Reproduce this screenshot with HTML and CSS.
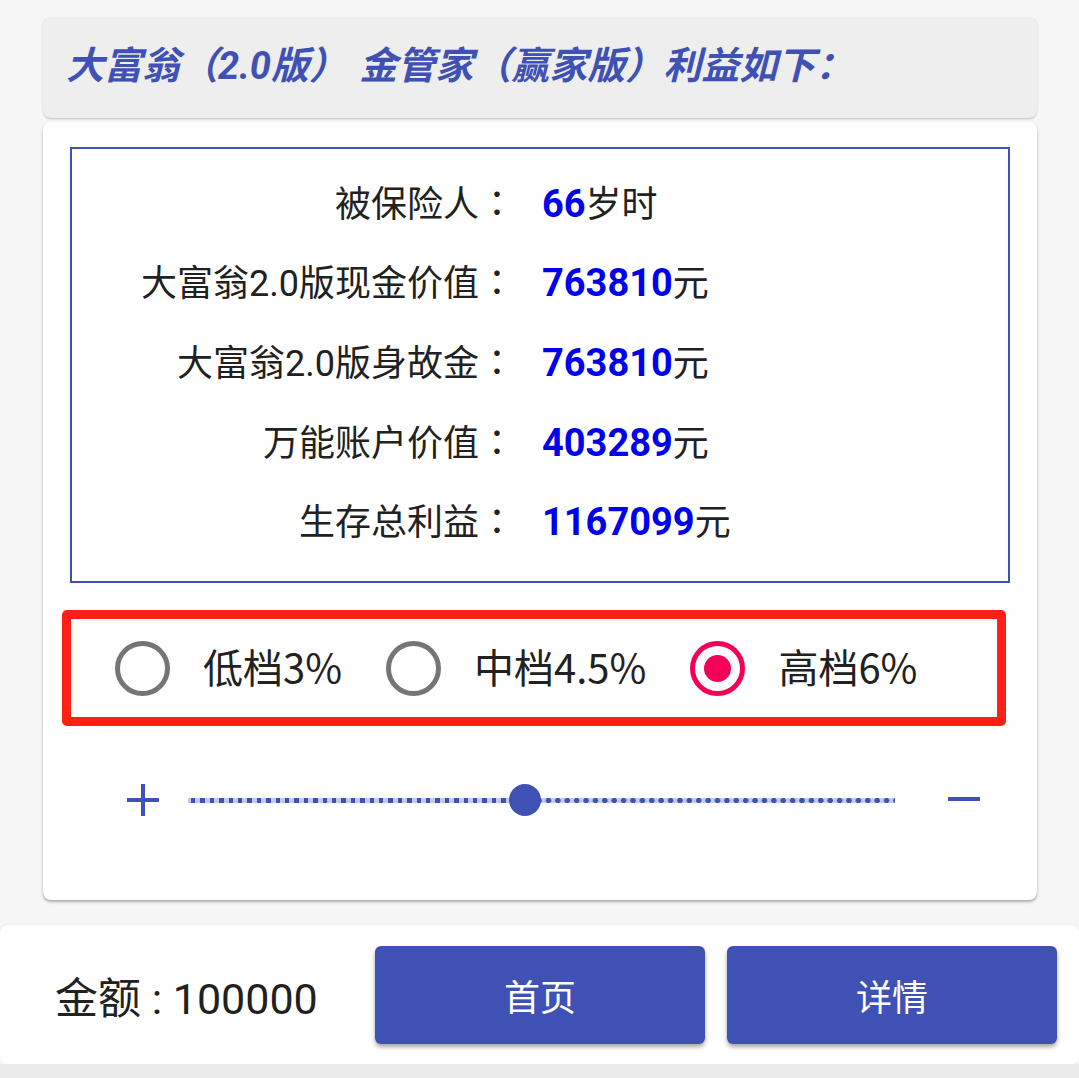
FILE: index.html
```html
<!DOCTYPE html>
<html lang="zh-CN">
<head>
<meta charset="utf-8">
<title>利益演示</title>
<link rel="stylesheet" href="styles.css">
</head>
<body>
<div class="page">
  <div class="header">
    <h1 class="title">大富翁（2.0版） 金管家（赢家版）利益如下：</h1>
  </div>

  <div class="card">
    <div class="databox">
      <div class="row"><span class="label">被保险人<span class="colon" lang="zh-TW">：</span></span><span class="value"><b class="num">66</b>岁时</span></div>
      <div class="row"><span class="label">大富翁2.0版现金价值<span class="colon" lang="zh-TW">：</span></span><span class="value"><b class="num">763810</b>元</span></div>
      <div class="row"><span class="label">大富翁2.0版身故金<span class="colon" lang="zh-TW">：</span></span><span class="value"><b class="num">763810</b>元</span></div>
      <div class="row"><span class="label">万能账户价值<span class="colon" lang="zh-TW">：</span></span><span class="value"><b class="num">403289</b>元</span></div>
      <div class="row"><span class="label">生存总利益<span class="colon" lang="zh-TW">：</span></span><span class="value"><b class="num">1167099</b>元</span></div>
    </div>

    <div class="radios">
      <div class="radio"><span class="ring"></span><span class="rtext">低档3%</span></div>
      <div class="radio"><span class="ring"></span><span class="rtext">中档4.5%</span></div>
      <div class="radio checked"><span class="ring"><span class="dot"></span></span><span class="rtext">高档6%</span></div>
    </div>

    <div class="slider">
      <svg class="icon-plus" width="32" height="32" viewBox="0 0 32 32"><path d="M16 0V32M0 16H32" stroke="#3f51b5" stroke-width="4" fill="none"/></svg>
      <div class="track">
        <div class="t-left"></div>
        <div class="t-right"></div>
        <div class="thumb"></div>
      </div>
      <svg class="icon-minus" width="32" height="32" viewBox="0 0 32 32"><path d="M0 15H32" stroke="#3f51b5" stroke-width="4" fill="none"/></svg>
    </div>
  </div>

  <div class="bottombar">
    <div class="amount">金额 : 100000</div>
    <button class="btn">首页</button>
    <button class="btn">详情</button>
  </div>
  <div class="navstrip"></div>
</div>
</body>
</html>
```

FILE: styles.css
```css
* { box-sizing: border-box; }

html, body {
  margin: 0;
  padding: 0;
}

body {
  width: 1079px;
  height: 1078px;
  overflow: hidden;
  background: #f6f6f6;
  font-family: Roboto, "Noto Sans CJK SC", sans-serif;
  color: #212121;
}

.page {
  display: flex;
  flex-direction: column;
  height: 1078px;
}

/* header */
.header {
  margin: 17px 42px 0 43px;
  height: 101px;
  background: #eeeeee;
  border-radius: 8px;
  box-shadow: 0 1px 2px rgba(0, 0, 0, 0.22);
  display: flex;
  align-items: center;
  padding-left: 23px;
}

.title {
  margin: 0;
  font-size: 38px;
  font-weight: bold;
  font-style: italic;
  color: #3f51b5;
  white-space: nowrap;
  line-height: 1;
  padding-bottom: 4px;
  word-spacing: 3px;
}

/* card */
.card {
  margin: 4px 42px 0 43px;
  height: 778px;
  background: #ffffff;
  border-radius: 8px;
  box-shadow: 0 2px 3px rgba(0, 0, 0, 0.3);
  padding: 25px 27px 0 27px;
}

.databox {
  height: 436px;
  border: 2px solid #3f51b5;
  padding: 12px 0 22px 0;
  display: flex;
  flex-direction: column;
}

.row {
  height: 80px;
  display: grid;
  grid-template-columns: 443px 1fr;
  column-gap: 27px;
  align-items: center;
  font-size: 36px;
}

.label {
  text-align: right;
  white-space: nowrap;
}

.colon {
  font-family: "Noto Sans CJK TC", "Noto Sans CJK JP", sans-serif;
}

.value {
  white-space: nowrap;
}

.num {
  color: #0000ee;
  font-weight: bold;
  font-size: 38px;
}

/* radios */
.radios {
  margin: 27px 0 0 -8px;
  width: 944px;
  height: 116px;
  border: 9px solid #ff1f14;
  border-radius: 5px;
  display: flex;
  align-items: center;
  padding-left: 44px;
  gap: 44px;
}

.radio {
  display: flex;
  align-items: center;
  gap: 33px;
}

.ring {
  width: 55px;
  height: 55px;
  border-radius: 50%;
  border: 5px solid #757575;
  display: flex;
  align-items: center;
  justify-content: center;
  flex: none;
}

.checked .ring {
  border-color: #f50057;
}

.dot {
  width: 27px;
  height: 27px;
  border-radius: 50%;
  background: #f50057;
}

.rtext {
  font-family: "Noto Sans CJK SC", sans-serif;
  font-size: 40px;
  line-height: 1.2;
  color: #212121;
  white-space: nowrap;
  padding-bottom: 4px;
}

/* slider */
.slider {
  height: 148px;
  display: flex;
  align-items: center;
  padding-left: 57px;
}

.icon-plus {
  flex: none;
}

.track {
  position: relative;
  margin-left: 29px;
  width: 707px;
  height: 5px;
  display: flex;
  background: #c5cae9;
}

.t-left {
  width: 337px;
  height: 5px;
  background: repeating-linear-gradient(to right, transparent 0 3px, #3f51b5 3px 7.5px, transparent 7.5px 9.4px);
}

.t-right {
  flex: 1;
  height: 5px;
  background-image: radial-gradient(circle at center, #3f51b5 0 2.4px, transparent 2.9px);
  background-size: 9.4px 5px;
  background-repeat: repeat-x;
}

.thumb {
  position: absolute;
  left: 321px;
  top: -14px;
  width: 32px;
  height: 32px;
  border-radius: 50%;
  background: #3f51b5;
}

.icon-minus {
  flex: none;
  margin-left: 53px;
}

/* bottom bar */
.bottombar {
  margin-top: 25px;
  height: 139px;
  background: #ffffff;
  border-radius: 8px;
  box-shadow: 0 -1px 2px rgba(0, 0, 0, 0.04);
  display: flex;
  align-items: center;
  padding: 0 22px 0 55px;
  gap: 22px;
}

.amount {
  flex: 1;
  font-size: 43px;
  color: #212121;
  white-space: nowrap;
}

.btn {
  width: 330px;
  height: 98px;
  border: none;
  border-radius: 6px;
  background: #3f51b5;
  color: #ffffff;
  font-family: Roboto, "Noto Sans CJK SC", sans-serif;
  font-size: 36px;
  box-shadow: 0 3px 4px rgba(0, 0, 0, 0.35);
  flex: none;
}

.navstrip {
  flex: 1;
  background: #ececec;
}
```
